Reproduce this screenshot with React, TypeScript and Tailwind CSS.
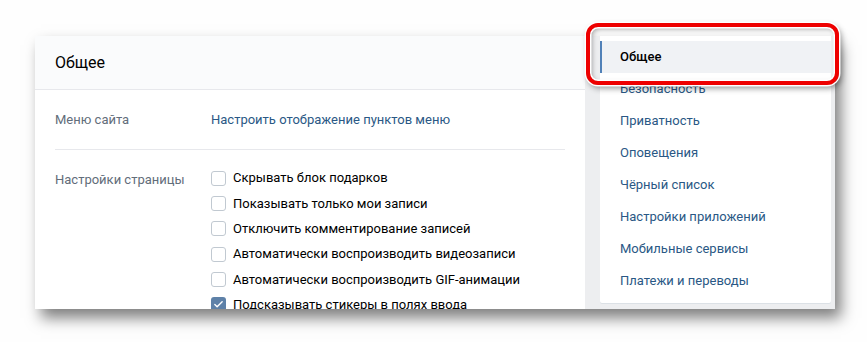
import { Check } from "lucide-react";

const options = [
  { label: "Скрывать блок подарков", checked: false },
  { label: "Показывать только мои записи", checked: false },
  { label: "Отключить комментирование записей", checked: false },
  { label: "Автоматически воспроизводить видеозаписи", checked: false },
  { label: "Автоматически воспроизводить GIF-анимации", checked: false },
  { label: "Подсказывать стикеры в полях ввода", checked: true },
];

const menu = [
  "Безопасность",
  "Приватность",
  "Оповещения",
  "Чёрный список",
  "Настройки приложений",
  "Мобильные сервисы",
  "Платежи и переводы",
];

function Checkbox({ checked }: { checked: boolean }) {
  return (
    <span
      className={
        checked
          ? "flex h-[15px] w-[15px] shrink-0 items-center justify-center rounded-[3px] bg-[#5e81a8]"
          : "h-[15px] w-[15px] shrink-0 rounded-[3px] border border-[#c1c9d1] bg-white"
      }
    >
      {checked && <Check size={11} strokeWidth={3} className="text-white" />}
    </span>
  );
}

function App() {
  return (
    <div className="relative h-[342px] w-[867px] overflow-hidden bg-[#fefefe] pl-[35px] pt-[36px] font-['Roboto',sans-serif] text-[13px]">
      <div className="flex h-[273px] w-[800px] overflow-hidden bg-[#edeef0] shadow-[6px_9px_14px_rgba(0,0,0,0.5)]">
        <div className="w-[550px] shrink-0 bg-white">
          <div className="flex h-[54px] items-center border-b border-[#e7e8ec] bg-[#fafbfc] pl-[20px] pt-[1px] text-[16px] text-black">
            Общее
          </div>
          <div className="px-[20px]">
            <div className="flex h-[60px] items-center border-b border-[#e7e8ec]">
              <div className="w-[156px] text-[#626d7a]">Меню сайта</div>
              <div className="text-[#2a5885]">Настроить отображение пунктов меню</div>
            </div>
            <div className="flex pt-[20px]">
              <div className="w-[156px] text-[#626d7a]">Настройки страницы</div>
              <div className="flex flex-col gap-[9.4px]">
                {options.map((o) => (
                  <div key={o.label} className="flex h-[16px] items-center gap-[7px] text-black">
                    <Checkbox checked={o.checked} />
                    <span>{o.label}</span>
                  </div>
                ))}
              </div>
            </div>
          </div>
        </div>
        <div className="ml-[15px] h-[267px] w-[231px] shrink-0 rounded-b-[2px] bg-white shadow-[0_1px_0_#dce1e6]">
          <div className="mt-[5px] flex h-[32px] items-center border-l-2 border-[#5181b8] bg-[#f0f2f5] pl-[18px] font-medium text-black">
            Общее
          </div>
          <div className="flex flex-col">
            {menu.map((m) => (
              <div key={m} className="flex h-[32px] items-center pl-[20px] text-[#2a5885]">
                {m}
              </div>
            ))}
          </div>
        </div>
      </div>
      <div className="absolute left-[586px] top-[23px] h-[62px] w-[253px] rounded-[12px] border-[4px] border-[#ee0000] shadow-[0_0_0_1.5px_white,2px_3px_6px_rgba(0,0,0,0.45),inset_0_0_0_1.5px_white,inset_2px_2px_5px_rgba(0,0,0,0.35)]" />
    </div>
  );
}

export default App;
